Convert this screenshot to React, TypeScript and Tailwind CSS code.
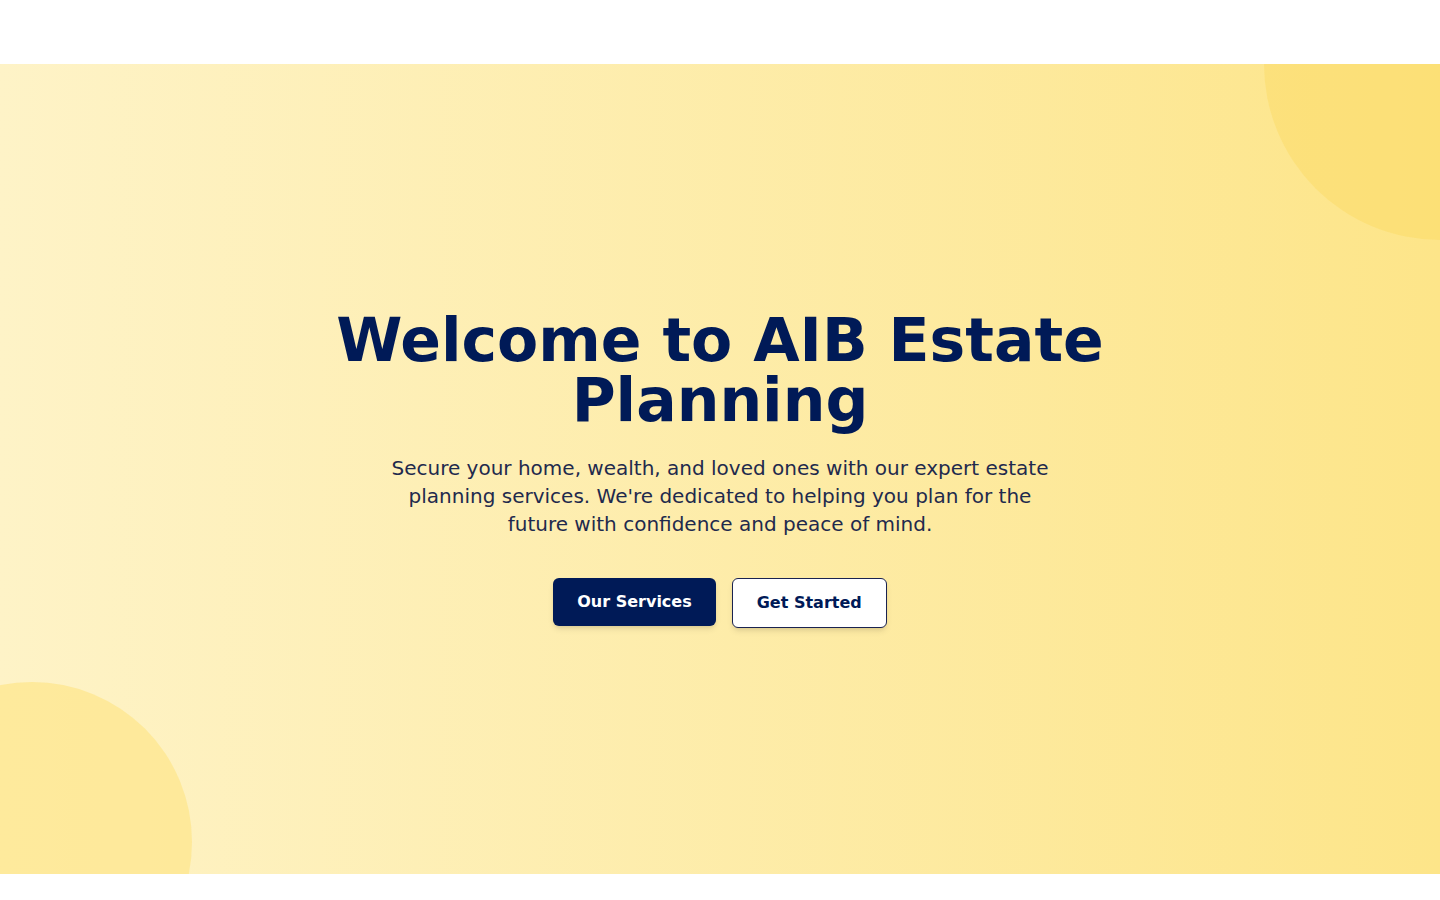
export default function App() {
  return (
    <div className="min-h-screen bg-white" style={{ fontFamily: '"DejaVu Sans", sans-serif' }}>
      {/* Header bar */}
      <header className="h-16 bg-white" />

      {/* Hero */}
      <section className="relative overflow-hidden h-[810px] bg-gradient-to-r from-[#fef3c7] to-[#fde589] flex items-center justify-center">
        <div className="absolute -top-[176px] -right-[176px] w-[352px] h-[352px] rounded-full bg-[#fcd34d]/30" />
        <div className="absolute -bottom-32 -left-32 w-80 h-80 rounded-full bg-[#fde68a]/70" />

        <div className="relative z-10 max-w-4xl px-4 text-center flex flex-col items-center">
          <h1 className="text-6xl leading-[60px] font-bold text-[#001a57]">
            Welcome to AIB Estate Planning
          </h1>
          <p className="mt-6 max-w-2xl text-xl leading-7 text-[#1f2a4d]">
            Secure your home, wealth, and loved ones with our expert estate planning services. We're dedicated to
            helping you plan for the future with confidence and peace of mind.
          </p>
          <div className="mt-10 flex items-start gap-4">
            <button className="px-6 py-3 rounded-md bg-[#001a57] text-white text-base font-bold shadow-md">
              Our Services
            </button>
            <button className="px-6 py-3 rounded-md bg-white border border-[#1a2350] text-[#001a57] text-base font-bold shadow-md">
              Get Started
            </button>
          </div>
        </div>
      </section>

      <div className="h-[26px] bg-white" />
    </div>
  )
}
